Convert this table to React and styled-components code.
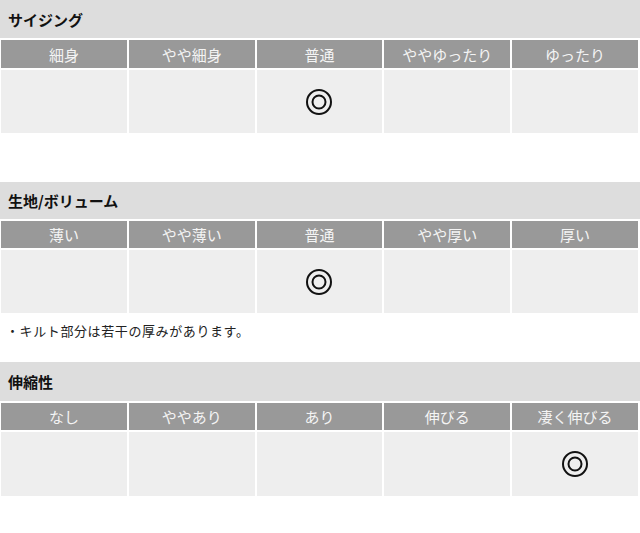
import * as React from 'react';
import styled, { createGlobalStyle } from 'styled-components';

const GlobalStyle = createGlobalStyle`
  body {
    margin: 0;
    background: #fff;
    font-family: "Noto Sans CJK JP", "Noto Sans", sans-serif;
    color: #222;
  }
`;

const Page = styled.div`
  width: 640px;
  min-height: 533px;
  display: flex;
  flex-direction: column;
`;

const Section = styled.section`
  display: flex;
  flex-direction: column;
  margin-bottom: ${({ gap }) => gap}px;
`;

const Title = styled.h3`
  margin: 0;
  height: ${({ h }) => h || 38}px;
  display: flex;
  align-items: center;
  padding-left: 8px;
  background: #dddddd;
  font-size: 15px;
  font-weight: 700;
  color: #111;
`;

const Grid = styled.div`
  display: grid;
  grid-template-columns: repeat(5, 1fr);
  gap: 2px;
  padding: 2px 2px 0 1px;
`;

const HeadCell = styled.div`
  height: ${({ h }) => h || 28}px;
  display: flex;
  align-items: center;
  justify-content: center;
  background: #999999;
  color: #f4f4f4;
  font-size: 15px;
`;

const BodyCell = styled.div`
  height: ${({ h }) => h || 63}px;
  display: flex;
  align-items: center;
  justify-content: center;
  background: #eeeeee;
`;

const Note = styled.p`
  margin: 0;
  height: 49px;
  box-sizing: border-box;
  padding: 8px 0 0 6px;
  font-size: 13px;
  letter-spacing: 0.6px;
  line-height: 20px;
  color: #222;
`;

const DoubleCircle = () => (
  <svg width="28" height="28" viewBox="0 0 28 28">
    <circle cx="14" cy="14" r="12" fill="none" stroke="#111" strokeWidth="2" />
    <circle cx="14" cy="14" r="6.5" fill="none" stroke="#111" strokeWidth="2" />
  </svg>
);

const sections = [
  {
    title: 'サイジング',
    cols: ['細身', 'やや細身', '普通', 'ややゆったり', 'ゆったり'],
    mark: 2,
    gap: 49,
  },
  {
    title: '生地/ボリューム',
    cols: ['薄い', 'やや薄い', '普通', 'やや厚い', '厚い'],
    mark: 2,
    note: '・キルト部分は若干の厚みがあります。',
    titleH: 37,
    headH: 27,
    gap: 0,
  },
  {
    title: '伸縮性',
    cols: ['なし', 'ややあり', 'あり', '伸びる', '凄く伸びる'],
    mark: 4,
    titleH: 39,
    headH: 27,
    bodyH: 64,
    gap: 0,
  },
];

export default function App() {
  return (
    <Page>
      <GlobalStyle />
      {sections.map((s) => (
        <Section key={s.title} gap={s.gap}>
          <Title h={s.titleH}>{s.title}</Title>
          <Grid>
            {s.cols.map((c) => (
              <HeadCell key={c} h={s.headH}>{c}</HeadCell>
            ))}
            {s.cols.map((c, i) => (
              <BodyCell key={c} h={s.bodyH}>{i === s.mark && <DoubleCircle />}</BodyCell>
            ))}
          </Grid>
          {s.note && <Note>{s.note}</Note>}
        </Section>
      ))}
    </Page>
  );
}
